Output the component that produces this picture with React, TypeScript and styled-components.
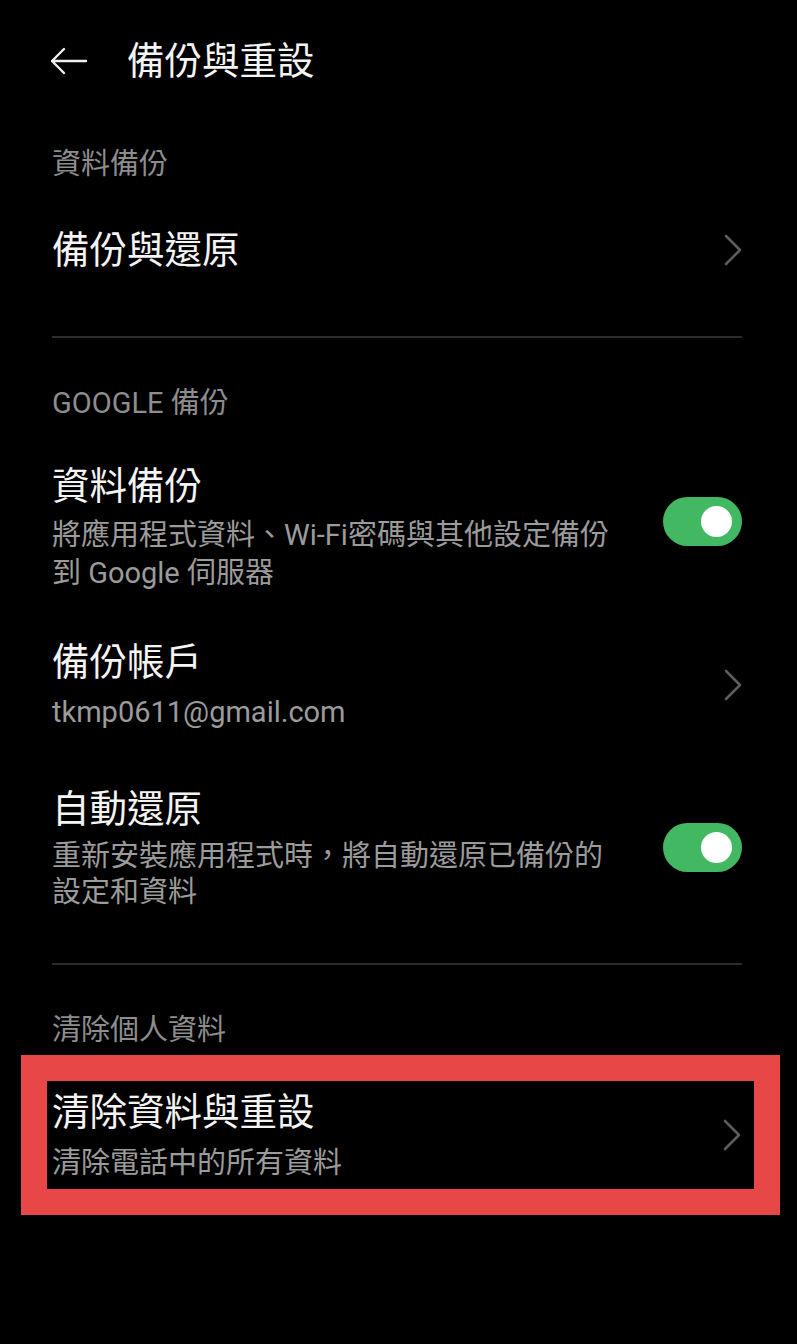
import styled, { createGlobalStyle } from 'styled-components'

const GlobalStyle = createGlobalStyle`
	html, body {
		margin: 0;
		padding: 0;
		background: #000;
	}
	body {
		font-family: Roboto, "Noto Sans CJK TC", sans-serif;
		color: #f2f2f2;
	}
`

const Page = styled.div`
	width: 797px;
	min-height: 1344px;
	background: #000;
	padding: 0 55px 0 52px;
	box-sizing: border-box;
`

const TopBar = styled.div`
	height: 120px;
	display: flex;
	align-items: center;
	gap: 38px;
	margin-left: -3px;
	padding-top: 2px;
	box-sizing: border-box;
`

const Title = styled.h1`
	margin: 0;
	font-size: 37.5px;
	font-weight: 400;
	line-height: 48px;
	color: #f4f4f4;
`

const SectionHeader = styled.div<{ $top: number }>`
	margin-top: ${(p) => p.$top}px;
	font-size: 29px;
	line-height: 38px;
	color: #8d8d8d;
`

const Item = styled.div<{ $pad?: string }>`
	display: flex;
	align-items: center;
	gap: 24px;
	padding: ${(p) => p.$pad || '24px 0'};
`

const Texts = styled.div<{ $gap?: number }>`
	flex: 1;
	display: flex;
	flex-direction: column;
	gap: ${(p) => p.$gap ?? 6}px;
`

const ItemTitle = styled.div`
	font-size: 37.5px;
	line-height: 48px;
	color: #f4f4f4;
`

const ItemSub = styled.div<{ $lh?: number }>`
	font-size: 29px;
	line-height: ${(p) => p.$lh ?? 38}px;
	color: #9b9b9b;
`

const Divider = styled.hr<{ $top: number }>`
	margin: ${(p) => p.$top}px 0 0;
	border: 0;
	height: 2px;
	background: #2b2b2b;
`

const Highlight = styled.div`
	margin: 6px -38px 0 -31px;
	border: 26px solid #e84747;
	padding: 0 13px 0 5px;
`

const Toggle = styled.div<{ $on: boolean; $shift?: number }>`
	width: 79px;
	height: 49px;
	border-radius: 25px;
	background: ${(p) => (p.$on ? '#42b863' : '#555')};
	position: relative;
	flex-shrink: 0;
	margin-top: ${(p) => (p.$shift ?? 0) * 2}px;

	&::after {
		content: '';
		position: absolute;
		top: 9px;
		${(p) => (p.$on ? 'right: 10px;' : 'left: 10px;')}
		width: 31px;
		height: 31px;
		border-radius: 50%;
		background: #fff;
	}
`

const BackArrow = () => (
	<svg width="40" height="30" viewBox="0 0 40 30">
		<path d="M3 15 H37 M15 3 L3 15 L15 27" fill="none" stroke="#f0f0f0" strokeWidth="2.4" strokeLinecap="round" strokeLinejoin="round" />
	</svg>
)

const Chevron = () => (
	<svg width="18" height="32" viewBox="0 0 18 32" style={{ flexShrink: 0 }}>
		<path d="M2 2 L16 16 L2 30" fill="none" stroke="#5c5c5c" strokeWidth="2.6" strokeLinecap="round" strokeLinejoin="round" />
	</svg>
)

const App = () => {
	return (
		<>
			<GlobalStyle />
			<Page>
				<TopBar>
					<BackArrow />
					<Title>備份與重設</Title>
				</TopBar>

				<SectionHeader $top={25}>資料備份</SectionHeader>
				<Item $pad="43px 0 24px">
					<Texts>
						<ItemTitle>備份與還原</ItemTitle>
					</Texts>
					<Chevron />
				</Item>

				<Divider $top={38} />

				<SectionHeader $top={46}>GOOGLE 備份</SectionHeader>
				<Item $pad="40px 0 23px">
					<Texts>
						<ItemTitle>資料備份</ItemTitle>
						<ItemSub>
							將應用程式資料、Wi-Fi密碼與其他設定備份
							<br />
							到 Google 伺服器
						</ItemSub>
					</Texts>
					<Toggle $on $shift={-6} />
				</Item>
				<Item $pad="23px 0 24px">
					<Texts $gap={7}>
						<ItemTitle>備份帳戶</ItemTitle>
						<ItemSub>tkmp0611@gmail.com</ItemSub>
					</Texts>
					<Chevron />
				</Item>
				<Item $pad="30px 0 24px">
					<Texts $gap={5}>
						<ItemTitle>自動還原</ItemTitle>
						<ItemSub $lh={36}>
							重新安裝應用程式時，將自動還原已備份的
							<br />
							設定和資料
						</ItemSub>
					</Texts>
					<Toggle $on />
				</Item>

				<Divider $top={29} />

				<SectionHeader $top={46}>清除個人資料</SectionHeader>
				<Highlight>
					<Item $pad="7px 0 7px">
						<Texts $gap={8}>
							<ItemTitle>清除資料與重設</ItemTitle>
							<ItemSub>清除電話中的所有資料</ItemSub>
						</Texts>
						<Chevron />
					</Item>
				</Highlight>
			</Page>
		</>
	)
}

export default App
